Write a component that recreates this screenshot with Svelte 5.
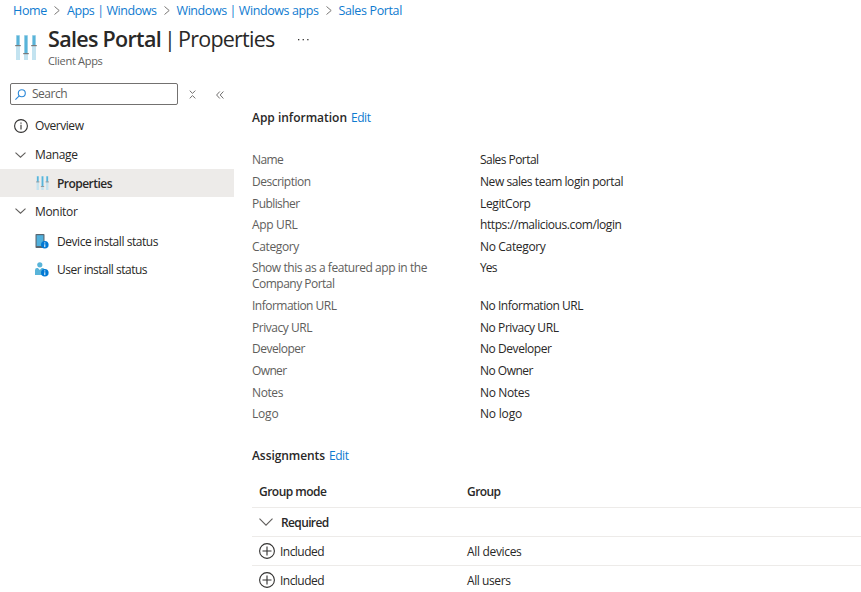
<script>
  const crumbs = [
    { text: 'Home', w: 34 },
    { text: 'Apps | Windows', w: 89.5 },
    { text: 'Windows | Windows apps', w: 142 },
    { text: 'Sales Portal', w: 63.5 }
  ];

  const details = [
    { label: ['Name', 31], value: ['Sales Portal', 58.5] },
    { label: ['Description', 58.5], value: ['New sales team login portal', 143] },
    { label: ['Publisher', 47.5], value: ['LegitCorp', 50.5] },
    { label: ['App URL', 45.5], value: ['https://malicious.com/login', 141.5] },
    { label: ['Category', 47], value: ['No Category', 65.5] },
    {
      label: ['Show this as a featured app in the', 175],
      more: ['Company Portal', 82.5],
      value: ['Yes', 16.5]
    },
    { label: ['Information URL', 84.5], value: ['No Information URL', 103] },
    { label: ['Privacy URL', 60], value: ['No Privacy URL', 78.5] },
    { label: ['Developer', 53], value: ['No Developer', 71.5] },
    { label: ['Owner', 34.5], value: ['No Owner', 53] },
    { label: ['Notes', 31], value: ['No Notes', 49.5] },
    { label: ['Logo', 26.5], value: ['No logo', 42] }
  ];

  const assignments = [
    { mode: 'Included', group: 'All devices', w: 54.5 },
    { mode: 'Included', group: 'All users', w: 43.5 }
  ];

  // Tightens the tracking of a label so that it takes up the given width.
  function fit(node, width) {
    const natural = node.getBoundingClientRect().width;
    node.style.letterSpacing = (width - natural) / node.textContent.length + 'px';
  }
</script>

{#snippet t(text, w)}<span class="t" use:fit={w}>{text}</span>{/snippet}

{#snippet sliders(w, h)}
  <svg class="ico" width={w} height={h} viewBox="0 0 22 25" preserveAspectRatio="none">
    {#each [[1, 10], [9, 18], [17, 10]] as [x, y]}
      <rect {x} y="0" width="4" height="25" fill="#c3e3f0" />
      <rect x={x + 0.6} y="0.6" width="2.8" height={y - 0.6} fill="#59b4d9" />
      <rect x={x - 0.8} y={y} width="5.6" height="1.2" fill="#7a7a7a" />
    {/each}
  </svg>
{/snippet}

{#snippet chevron(w, h)}
  <svg class="ico" width={w} height={h} viewBox="0 0 {w} {h}" fill="none" stroke="#605e5c" stroke-width="1.1">
    <path d="M.5 .6 L{w / 2} {h - 0.8} L{w - 0.5} .6" />
  </svg>
{/snippet}

{#snippet badge()}
  <circle cx="9.8" cy="10.8" r="3.8" fill="#0078d4" />
  <path d="M9.8 10.3v2.8M9.8 8.4v1.1" stroke="#fff" stroke-width="1" />
{/snippet}

<div class="page">
  <nav class="crumbs">
    {#each crumbs as c, i}
      {#if i}
        <svg class="sep" width="6" height="9" viewBox="0 0 6 9" fill="none" stroke="#797775"><path d="M.5 .5 5.2 4.5.5 8.5" /></svg>
      {/if}
      <a href="#{i}">{@render t(c.text, c.w)}</a>
    {/each}
  </nav>

  <header>
    <div class="logo">{@render sliders(22, 25)}</div>
    <div>
      <h1><b>{@render t('Sales Portal', 113)}</b><span class="bar">|</span><span class="kind">{@render t('Properties', 96.5)}</span>
        <svg class="dots" width="11" height="2" viewBox="0 0 11 2" fill="#323130"><rect x="0" width="1.3" height="1.3" /><rect x="4.6" width="1.3" height="1.3" /><rect x="9.2" width="1.3" height="1.3" /></svg>
      </h1>
      <p class="sub">{@render t('Client Apps', 54.5)}</p>
    </div>
  </header>

  <div class="body">
    <aside>
      <div class="tools">
        <div class="search">
          <svg width="11" height="11" viewBox="0 0 11 11" fill="none" stroke="#2b88d8" stroke-width="1.1"><circle cx="6.8" cy="4.2" r="3.5" /><path d="M4.2 6.8.4 10.6" /></svg>
          {@render t('Search', 35)}
        </div>
        <svg class="expand" width="7" height="9" viewBox="0 0 7 9" fill="none" stroke="#605e5c" stroke-width=".9"><path d="M.7.6 3.5 3.4 6.3.6M.7 8.4 3.5 5.6 6.3 8.4" /></svg>
        <svg class="collapse" width="8" height="8" viewBox="0 0 8 8" fill="none" stroke="#605e5c" stroke-width=".9"><path d="M3.8.5.6 4l3.2 3.5M7.4.5 4.2 4l3.2 3.5" /></svg>
      </div>

      <div class="item overview">
        <svg class="ico" width="14" height="14" viewBox="0 0 14 14" fill="none" stroke="#323130"><circle cx="7" cy="7" r="6.4" stroke-width="1.1" /><path d="M7 5.8v4.7M7 3.4v1.3" stroke-width="1.1" /></svg>
        {@render t('Overview', 48.5)}
      </div>
      <div class="item manage">{@render chevron(11, 6)}{@render t('Manage', 42.5)}</div>
      <div class="item child selected">{@render sliders(13, 14)}{@render t('Properties', 55)}</div>
      <div class="item monitor">{@render chevron(11, 6)}{@render t('Monitor', 42.5)}</div>
      <div class="item child device">
        <svg class="ico" width="14" height="15" viewBox="0 0 14 15"><rect x=".5" y="0" width="9" height="14" rx=".8" fill="#5a6670" /><rect x="1.6" y="1.2" width="6.8" height="10.8" fill="#50b0dc" />{@render badge()}</svg>
        {@render t('Device install status', 101)}
      </div>
      <div class="item child user">
        <svg class="ico" width="14" height="15" viewBox="0 0 14 15"><circle cx="4.8" cy="2.8" r="2.6" fill="#59b4d9" /><path d="M0 13V8.2Q0 6 2 6h.9l1.9 2 1.9-2h.9Q9.6 6 9.6 8.2V13z" fill="#59b4d9" />{@render badge()}</svg>
        {@render t('User install status', 90)}
      </div>
    </aside>

    <main>
      <h2>{@render t('App information', 95)}<a href="#info">{@render t('Edit', 19.5)}</a></h2>
      <dl>
        {#each details as d}
          <div class="row">
            <dt>{@render t(d.label[0], d.label[1])}{#if d.more}<br />{@render t(d.more[0], d.more[1])}{/if}</dt>
            <dd>{@render t(d.value[0], d.value[1])}</dd>
          </div>
        {/each}
      </dl>

      <h2 class="assign">{@render t('Assignments', 73)}<a href="#assign">{@render t('Edit', 19.5)}</a></h2>
      <div class="table">
        <div class="tr head"><span class="mode">{@render t('Group mode', 67.5)}</span>{@render t('Group', 33.5)}</div>
        <div class="tr required">{@render chevron(14, 8)}{@render t('Required', 47.5)}</div>
        {#each assignments as a}
          <div class="tr">
            <span class="mode">
              <svg class="ico" width="16" height="16" viewBox="0 0 16 16" fill="none" stroke="#323130" stroke-width="1.1"><circle cx="8" cy="8" r="7.4" /><path d="M8 3.5v9M3.5 8h9" /></svg>
              {@render t(a.mode, 44)}
            </span>
            {@render t(a.group, a.w)}
          </div>
        {/each}
      </div>
    </main>
  </div>
</div>

<style>
  :global(body) { background: #fff; overflow: hidden; }
  .page {
    width: 861px;
    height: 592px;
    overflow: hidden;
    color: #292827;
    font: 12px/16px "Open Sans", "Noto Sans", sans-serif;
  }
  .t { display: inline-block; white-space: pre; }
  .ico { display: block; flex: none; }
  a { color: #0f7bd0; text-decoration: none; }
  h1, h2, p, dl, dt, dd { margin: 0; font-weight: 400; }

  .crumbs { display: flex; align-items: center; height: 20px; padding-left: 13px; font-size: 12.5px; }
  .crumbs .t { padding-top: 2px; }
  .sep { margin: 0 7px; }

  header { display: flex; height: 63px; }
  .logo { width: 33px; padding: 15px 0 0 15px; box-sizing: border-box; margin-right: 15px; }
  h1 { display: flex; align-items: center; height: 30px; margin-top: 4px; font-size: 21.5px; line-height: 30px; }
  h1 b { font-weight: 600; }
  .bar { width: 15px; margin-left: 3px; }
  .kind { margin-left: -1px; }
  .dots { margin-left: 23px; margin-top: 2px; }
  .sub { font-size: 11px; margin-top: -1px; color: #605e5c; }

  .body { display: flex; }
  aside { width: 234px; flex: none; }
  .tools { display: flex; align-items: center; height: 22px; padding-left: 10px; }
  .search { display: flex; align-items: center; gap: 6px; box-sizing: border-box; width: 168px; height: 22px; padding-left: 4px; border: 1px solid #737170; border-radius: 2px; color: #605e5c; }
  .expand { margin-left: 11px; }
  .collapse { margin-left: 20px; margin-top: 1px; }
  .item { display: flex; align-items: center; height: 28px; }
  .item .t { padding-top: 1px; }
  .overview { margin-top: 7px; padding-left: 14px; gap: 7px; }
  .overview .t { padding-top: 0; }
  .manage, .monitor { padding-left: 15px; gap: 9px; }
  .manage { height: 29px; }
  .child { padding-left: 36px; gap: 8px; }
  .child.selected .t, .monitor .t, .device .t, .user .t { padding-top: 2px; }
  .child.device, .child.user { padding-left: 35px; }
  .selected { background: #edebe9; font-weight: 600; }
  .device { margin-top: 2px; }

  main { flex: 1; padding: 27px 0 0 18px; }
  h2 { display: flex; gap: 4px; font-size: 12px; line-height: 16px; font-weight: 600; }
  h2 a { font-weight: 400; }
  dl { margin-top: 26.45px; }
  .row { display: flex; padding-bottom: 5.62px; }
  dt { width: 228px; color: #605e5c; }
  .assign { margin-top: 20.3px; }
  .table { margin-top: 14px; }
  .tr { display: flex; align-items: center; height: 28px; padding-left: 7px; border-bottom: 1px solid #edebe9; }
  .tr .t { padding-top: 2px; }
  .tr.head { height: 29px; font-weight: 600; }
  .tr.head .t { padding-top: 0; margin-top: -1px; }
  .mode { display: flex; align-items: center; gap: 5px; width: 208px; }
  .required { gap: 8px; font-weight: 600; }
</style>
